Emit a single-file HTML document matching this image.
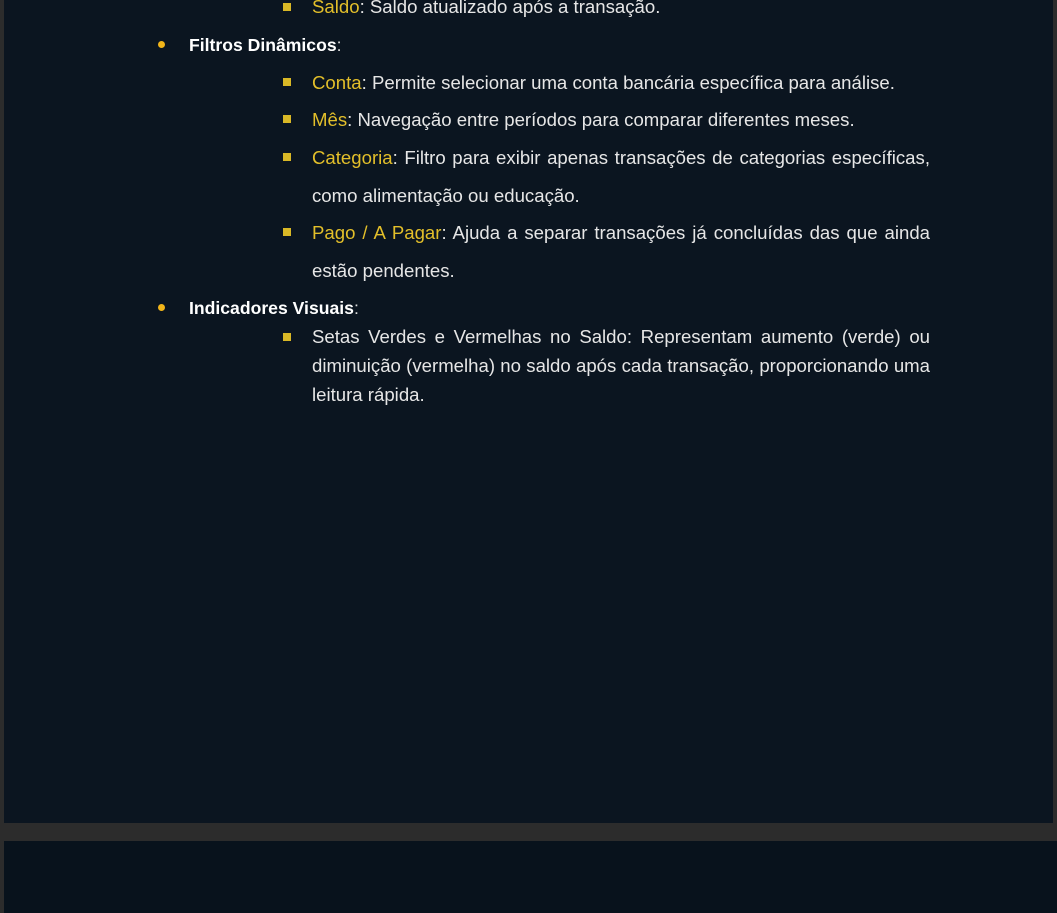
<!DOCTYPE html>
<html><head><meta charset="utf-8"><style>
*{margin:0;padding:0}
body{width:1057px;height:913px;background:#2c2c2c;position:relative;overflow:hidden;font-family:"Liberation Sans",sans-serif;}
.p1{position:absolute;left:4px;top:0;width:1049px;height:823px;background:#0b1520;}
.p2{position:absolute;left:4px;top:841px;width:1053px;height:72px;background:#08121c;}
.l{position:absolute;left:312px;color:#e6e6e6;font-size:18.6px;letter-spacing:0;white-space:nowrap;line-height:22px}
.j{width:618px;text-align:justify;text-align-last:justify;white-space:normal}
.y{color:#e3bf2a}
.sq{position:absolute;left:283px;width:8px;height:8px;background:#d9b826}
.dot{position:absolute;left:158px;width:7px;height:7px;border-radius:50%;background:#f2b519}
.h{position:absolute;left:189px;color:#fff;font-weight:bold;font-size:17.6px;line-height:22px}
</style></head><body>
<div class="p1"></div><div class="p2"></div>
<div class="sq" style="top:3px"></div><div class="l" style="top:-4px"><span class="y">Saldo</span>: Saldo atualizado após a transação.</div>
<div class="dot" style="top:41px"></div><div class="h" style="top:34px">Filtros Dinâmicos<span style="font-weight:normal;color:#ddd">:</span></div>
<div class="sq" style="top:78px"></div><div class="l" style="top:72px"><span class="y">Conta</span>: Permite selecionar uma conta bancária específica para análise.</div>
<div class="sq" style="top:115px"></div><div class="l" style="top:109px"><span class="y">Mês</span>: Navegação entre períodos para comparar diferentes meses.</div>
<div class="sq" style="top:153px"></div><div class="l j" style="top:147px"><span class="y">Categoria</span>: Filtro para exibir apenas transações de categorias específicas,</div>
<div class="l" style="top:185px">como alimentação ou educação.</div>
<div class="sq" style="top:228px"></div><div class="l j" style="top:222px"><span class="y">Pago / A Pagar</span>: Ajuda a separar transações já concluídas das que ainda</div>
<div class="l" style="top:260px">estão pendentes.</div>
<div class="dot" style="top:304px"></div><div class="h" style="top:297px">Indicadores Visuais<span style="font-weight:normal;color:#ddd">:</span></div>
<div class="sq" style="top:333px"></div><div class="l j" style="top:326px">Setas Verdes e Vermelhas no Saldo: Representam aumento (verde) ou</div>
<div class="l j" style="top:355px">diminuição (vermelha) no saldo após cada transação, proporcionando uma</div>
<div class="l" style="top:384px">leitura rápida.</div>
</body></html>
